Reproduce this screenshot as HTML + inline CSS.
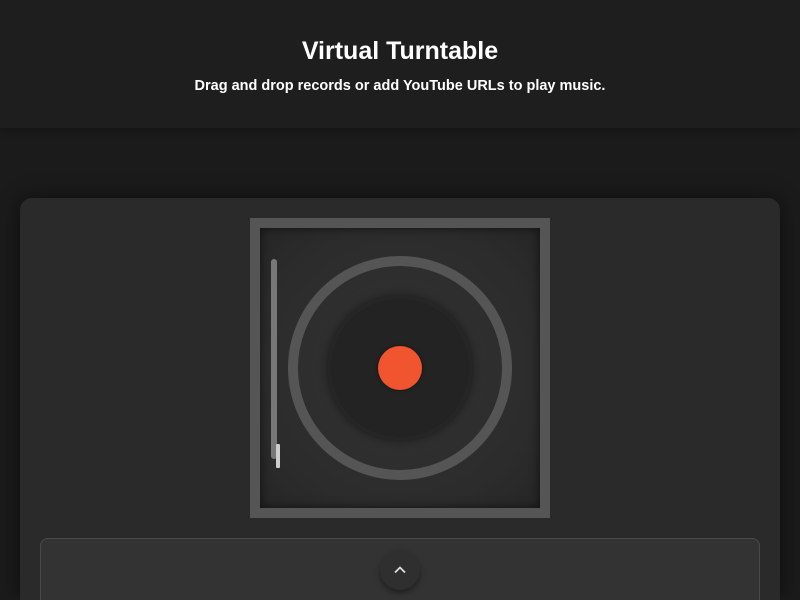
<!DOCTYPE html>
<html><head><meta charset="utf-8"><style>
html,body{margin:0;padding:0;width:800px;height:600px;overflow:hidden;background:#1b1b1b;font-family:"Liberation Sans",sans-serif;}
.hdr{position:absolute;left:0;top:0;width:800px;height:128px;background:#1e1e1e;box-shadow:0 2px 8px rgba(0,0,0,.3);text-align:center;color:#fff}
h1{margin:0;position:absolute;top:37px;width:100%;font-size:25px;font-weight:bold;letter-spacing:0px}
p{margin:0;position:absolute;top:78px;width:100%;font-size:14.5px;font-weight:bold}
.panel{position:absolute;left:20px;top:198px;width:760px;height:402px;background:#2a2a2a;border-radius:12px 12px 0 0;box-shadow:0 0 20px rgba(0,0,0,.5)}
.tt{position:absolute;left:250px;top:218px;width:280px;height:280px;border:10px solid #555;background:radial-gradient(circle at 50% 50%,#333 0%,#2c2c2c 70%,#262626 100%);box-shadow:inset 0 0 10px rgba(0,0,0,.6)}
.ring{position:absolute;left:288px;top:256px;width:204px;height:204px;border:10px solid #555;border-radius:50%}
.rec{position:absolute;left:328px;top:296px;width:144px;height:144px;border-radius:50%;background:#232323;box-shadow:0 0 10px rgba(0,0,0,.5),inset 0 0 6px rgba(255,255,255,.05)}
.lbl{position:absolute;left:378px;top:346px;width:44px;height:44px;border-radius:50%;background:#f05530;box-shadow:0 0 3px rgba(0,0,0,.5)}
.arm{position:absolute;left:271px;top:259px;width:6px;height:200px;border-radius:3px;background:#777}
.ndl{position:absolute;left:276px;top:444px;width:4px;height:24px;border-radius:1px;background:#ccc}
.bot{position:absolute;left:40px;top:538px;width:718px;height:61px;background:#333;border:1px solid #4a4a4a;border-bottom:none;border-radius:8px 8px 0 0}
.btn{position:absolute;left:380px;top:550px;width:40px;height:40px;border-radius:50%;background:#2f2f2f;box-shadow:0 3px 6px rgba(0,0,0,.4)}
</style></head><body>
<div class="hdr"><h1>Virtual Turntable</h1><p>Drag and drop records or add YouTube URLs to play music.</p></div>
<div class="panel"></div>
<div class="tt"></div>
<div class="ring"></div>
<div class="rec"></div>
<div class="lbl"></div>
<div class="arm"></div>
<div class="ndl"></div>
<div class="bot"></div>
<div class="btn"><svg width="40" height="40" viewBox="0 0 40 40"><path d="M15 22.5 L20 17.5 L25 22.5" stroke="#ddd" stroke-width="1.8" fill="none"/></svg></div>
</body></html>
